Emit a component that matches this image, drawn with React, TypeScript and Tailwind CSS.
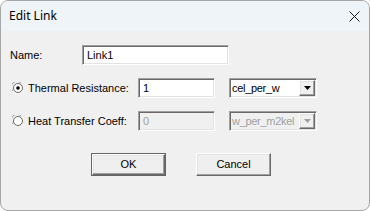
import React from "react";

const sunken =
  "border border-t-[#a0a0a0] border-l-[#a0a0a0] border-b-white border-r-white shadow-[inset_1px_1px_0_#696969,inset_-1px_-1px_0_#e3e3e3]";
const raised =
  "border border-t-white border-l-white border-b-[#696969] border-r-[#696969] shadow-[inset_-1px_-1px_0_#a0a0a0,inset_1px_1px_0_#e3e3e3]";

function Radio({ checked }: { checked?: boolean }) {
  return (
    <svg width="12" height="12" viewBox="0 0 12 12" className="shrink-0">
      <path d="M1 9 A5 5 0 0 1 9 1" stroke="#a0a0a0" fill="none" />
      <path d="M3 11 A5 5 0 0 0 11 3" stroke="#ffffff" fill="none" />
      <circle cx="6" cy="6" r="4.5" fill="#ffffff" stroke="#696969" strokeWidth="1" />
      {checked && <circle cx="6" cy="6" r="1.8" fill="#000" />}
    </svg>
  );
}

function Combo({ value, disabled }: { value: string; disabled?: boolean }) {
  return (
    <div
      className={`${sunken} w-[88px] h-[20px] flex items-center shrink-0 ${disabled ? "bg-[#f0f0f0] text-[#a0a0a0]" : "bg-white text-black"}`}
    >
      <span className="flex-1 pl-[2px] text-[11px] tracking-[-0.3px] leading-[16px] whitespace-nowrap overflow-hidden">{value}</span>
      <div className={`${raised} w-[16px] h-[16px] mr-[1px] bg-[#f0f0f0] flex items-center justify-center shrink-0`}>
        <svg width="7" height="4" viewBox="0 0 7 4">
          <path d="M0 0 H7 L3.5 4 Z" fill={disabled ? "#a0a0a0" : "#000"} />
        </svg>
      </div>
    </div>
  );
}

export default function App() {
  return (
    <div
      className="w-[370px] h-[211px] bg-white"
      style={{ fontFamily: '"Liberation Sans", Arial, sans-serif' }}
    >
      <div className="w-[370px] h-[211px] border border-[#a6a6a6] rounded-[8px] overflow-hidden flex flex-col bg-[#f0f0f0]">
        <div className="h-[30px] bg-[#eff4f9] flex items-center justify-between pl-[8px] pr-[9px] shrink-0">
          <span className="text-[12px] text-black" style={{ fontFamily: '"Noto Sans", sans-serif' }}>
            Edit Link
          </span>
          <svg width="11" height="11" viewBox="0 0 11 11">
            <path d="M0.5 0.5 L10.5 10.5 M10.5 0.5 L0.5 10.5" stroke="#1a1a1a" strokeWidth="1" />
          </svg>
        </div>
        <div className="flex flex-col pt-[14px] text-[11px] text-black">
          <div className="flex items-center pl-[9px] h-[20px]">
            <span className="w-[72px] shrink-0 whitespace-nowrap">Name:</span>
            <div className={`${sunken} w-[147px] h-[20px] bg-white flex items-center pl-[4px] shrink-0`}>Link1</div>
          </div>
          <div className="flex items-center pl-[11px] h-[20px] mt-[13px]">
            <Radio checked />
            <span className="w-[114px] shrink-0 whitespace-nowrap pl-[4px]">Thermal Resistance:</span>
            <div className={`${sunken} w-[77px] h-[20px] bg-white flex items-center pl-[4px] shrink-0`}>1</div>
            <div className="ml-[14px]">
              <Combo value="cel_per_w" />
            </div>
          </div>
          <div className="flex items-center pl-[11px] h-[20px] mt-[13px]">
            <Radio />
            <span className="w-[114px] shrink-0 whitespace-nowrap pl-[4px]">Heat Transfer Coeff:</span>
            <div className={`${sunken} w-[77px] h-[20px] bg-[#f0f0f0] text-[#a0a0a0] flex items-center pl-[4px] shrink-0`}>0</div>
            <div className="ml-[14px]">
              <Combo value="w_per_m2kel" disabled />
            </div>
          </div>
          <div className="flex pl-[90px] gap-[30px] mt-[22px]">
            <div className="w-[75px] h-[23px] border border-[#646464] flex">
              <div className={`${raised} flex-1 bg-[#efefef] flex items-center justify-center`}>OK</div>
            </div>
            <div className={`${raised} w-[75px] h-[23px] bg-[#efefef] flex items-center justify-center`}>Cancel</div>
          </div>
        </div>
      </div>
    </div>
  );
}
